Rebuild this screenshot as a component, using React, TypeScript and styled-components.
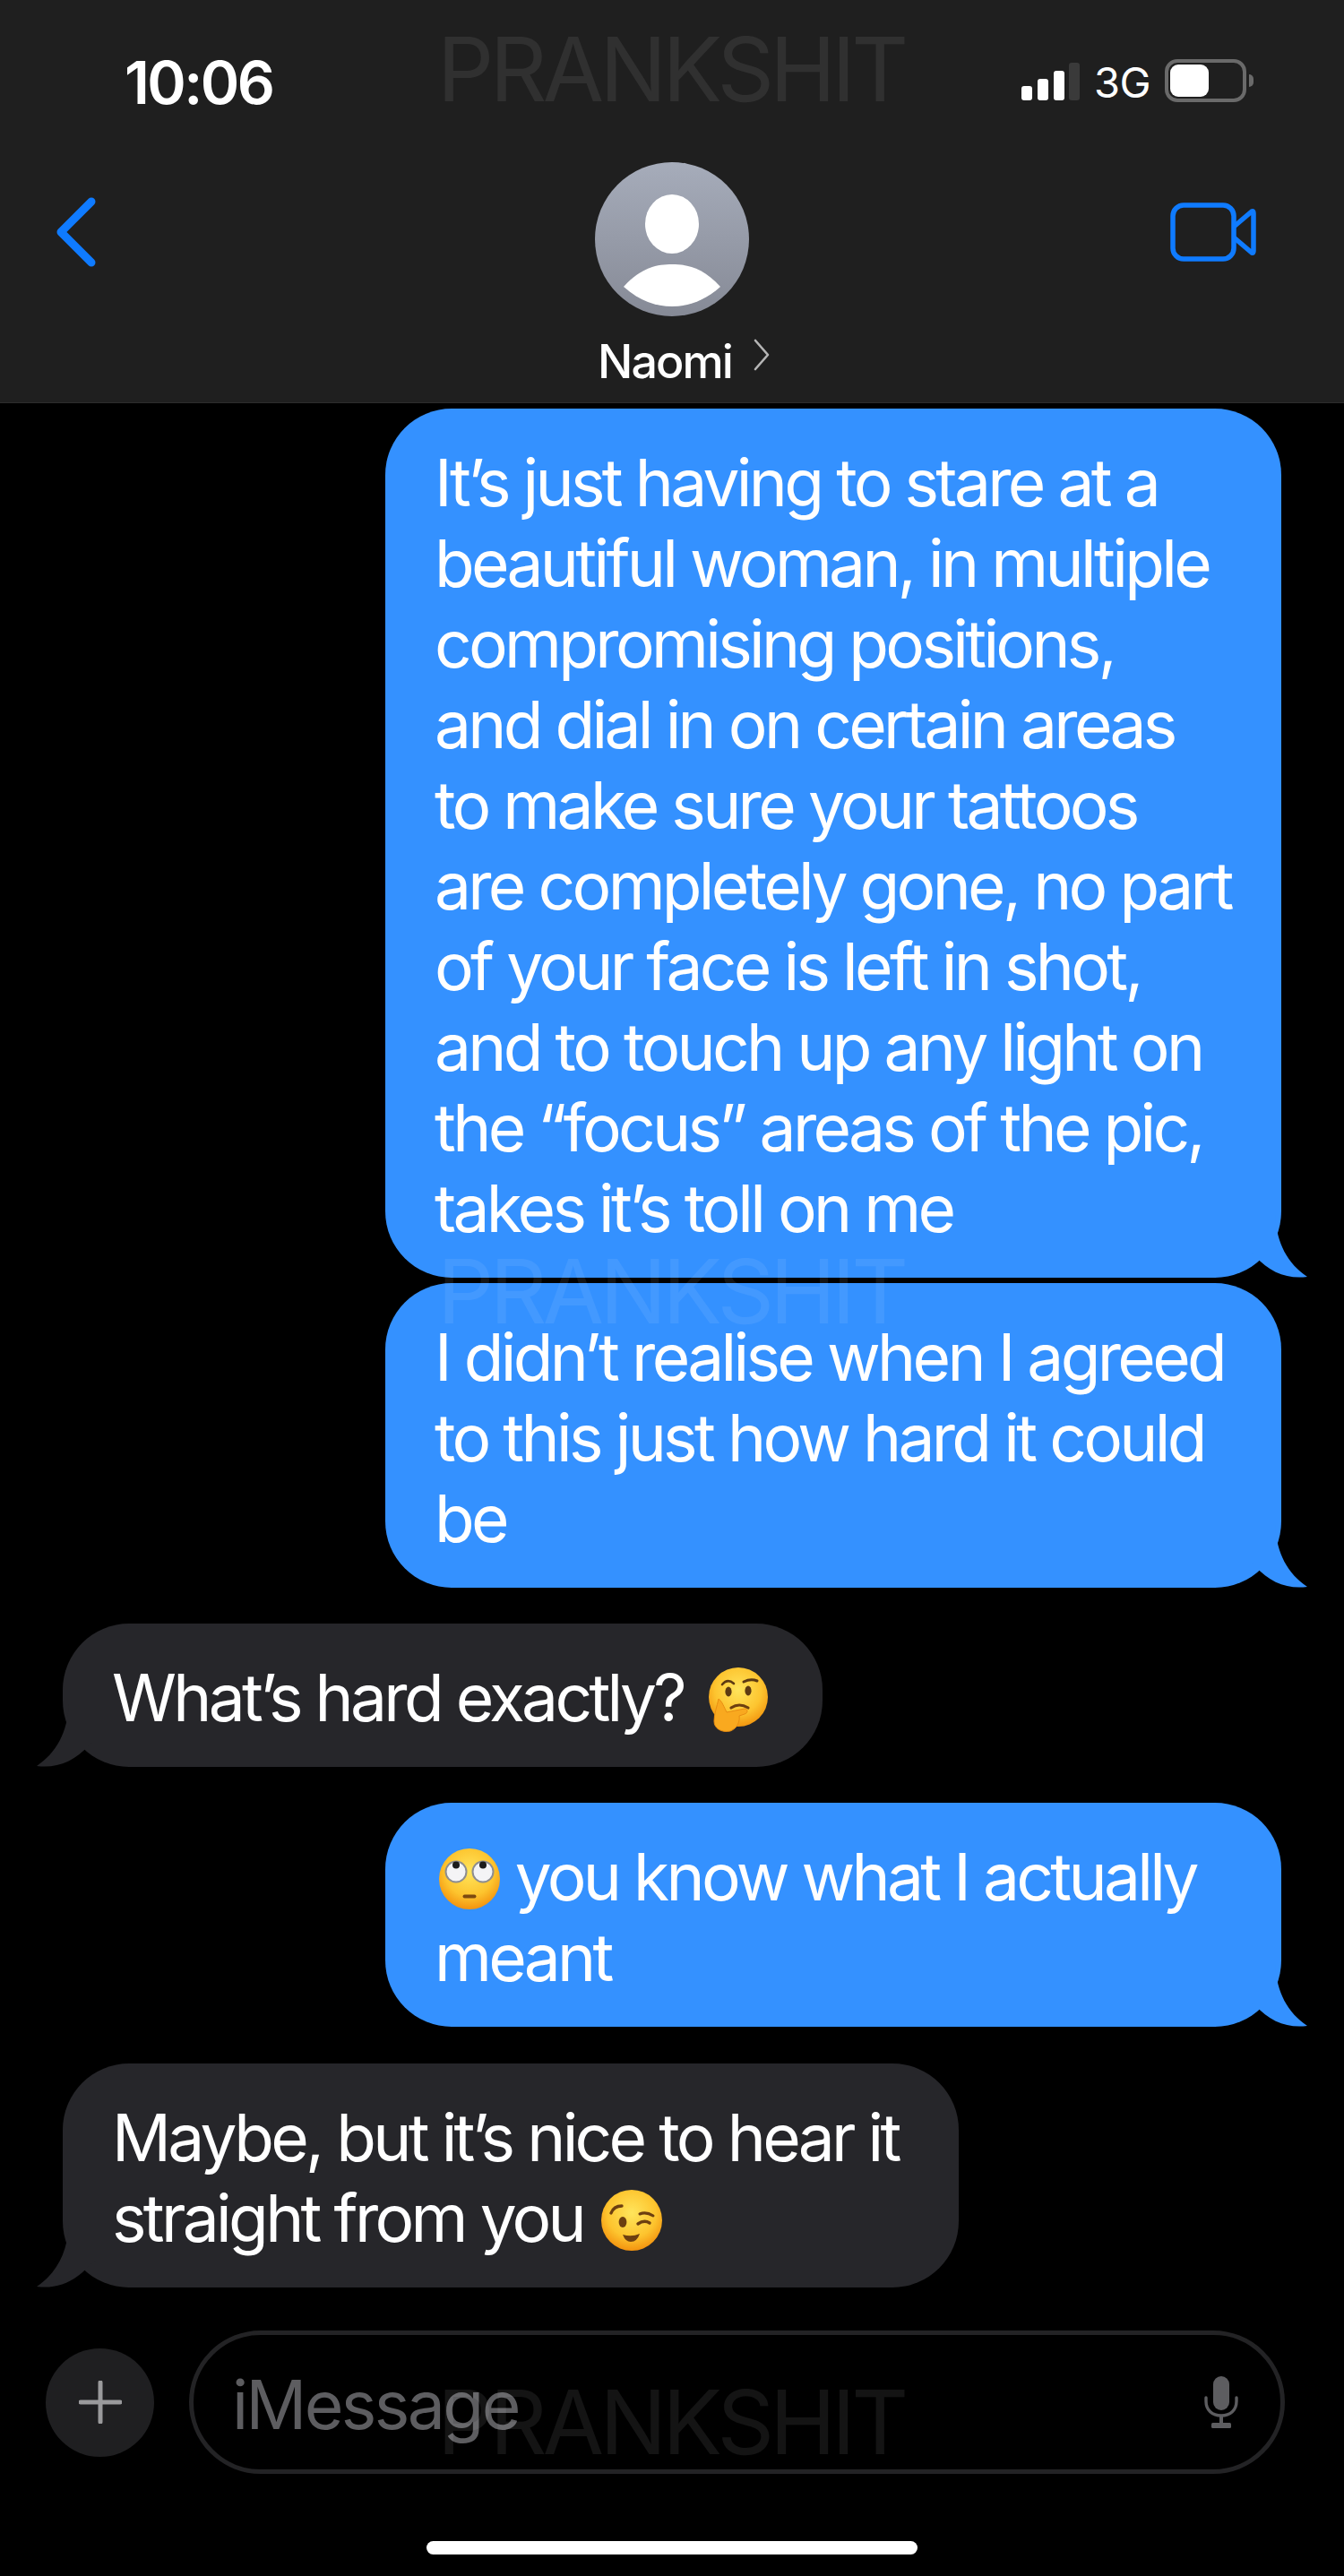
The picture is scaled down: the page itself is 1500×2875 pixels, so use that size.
import styled, { createGlobalStyle } from "styled-components";

const GlobalStyle = createGlobalStyle`
  html, body {
    margin: 0;
    padding: 0;
    background: #000;
  }
`;

function ThinkingEmoji() {
  return (
    <EmojiIcon viewBox="0 0 70 72" $width={70} $height={72} $lift={-12} $shift={9}>
      <defs>
        <radialGradient id="thinkFace" cx="50%" cy="38%" r="60%">
          <stop offset="0%" stopColor="#ffe45c" />
          <stop offset="65%" stopColor="#fdc530" />
          <stop offset="100%" stopColor="#f39a12" />
        </radialGradient>
      </defs>
      <circle cx="35" cy="33" r="33" fill="url(#thinkFace)" />
      <path d="M17 19 Q23 12 30 18" fill="none" stroke="#5d3a12" strokeWidth="2.6" strokeLinecap="round" />
      <path d="M41 16 Q49 12 56 15" fill="none" stroke="#5d3a12" strokeWidth="3" strokeLinecap="round" />
      <ellipse cx="24" cy="27" rx="3.6" ry="5.4" fill="#5d3a12" />
      <ellipse cx="46" cy="26" rx="3.6" ry="5.4" fill="#5d3a12" />
      <path d="M27 45 Q36 39 46 45" fill="none" stroke="#6d3f10" strokeWidth="3.2" strokeLinecap="round" />
      <path
        d="M13 35 C17 38 19 44 22 50 L42 46 C46 46 46 51 42 52 L36 54 C37 60 34 68 26 71 C16 73 8 68 8 60 C8 52 11 44 13 35 Z"
        fill="#f9a91f"
        stroke="#e98d12"
        strokeWidth="1"
      />
    </EmojiIcon>
  );
}

function RollingEyesEmoji() {
  return (
    <EmojiIcon viewBox="0 0 68 68" $width={68} $height={68} $lift={-10} $shift={5}>
      <defs>
        <radialGradient id="rollFace" cx="50%" cy="38%" r="62%">
          <stop offset="0%" stopColor="#ffe55c" />
          <stop offset="65%" stopColor="#fdc42e" />
          <stop offset="100%" stopColor="#f3930f" />
        </radialGradient>
      </defs>
      <circle cx="34" cy="34" r="34" fill="url(#rollFace)" />
      <circle cx="19" cy="26" r="11.5" fill="#f4f4f6" stroke="#8d8d90" strokeWidth="2" />
      <circle cx="49" cy="26" r="11.5" fill="#f4f4f6" stroke="#8d8d90" strokeWidth="2" />
      <circle cx="19" cy="18.5" r="4" fill="#1c1c1c" />
      <circle cx="49" cy="18.5" r="4" fill="#1c1c1c" />
      <rect x="26.5" y="51.5" width="15" height="4" rx="2" fill="#7d4a10" />
    </EmojiIcon>
  );
}

function WinkEmoji() {
  return (
    <EmojiIcon viewBox="0 0 68 68" $width={68} $height={68} $lift={-10} $shift={3}>
      <defs>
        <radialGradient id="winkFace" cx="50%" cy="38%" r="62%">
          <stop offset="0%" stopColor="#ffe55c" />
          <stop offset="65%" stopColor="#fdc42e" />
          <stop offset="100%" stopColor="#f3930f" />
        </radialGradient>
      </defs>
      <circle cx="34" cy="34" r="34" fill="url(#winkFace)" />
      <path d="M11 26 Q14 18 23 18" fill="none" stroke="#6d3f10" strokeWidth="3.4" strokeLinecap="round" />
      <ellipse cx="24" cy="36" rx="4.4" ry="6" fill="#6d3f10" />
      <path d="M43 27 Q50 24 58 29" fill="none" stroke="#6d3f10" strokeWidth="3" strokeLinecap="round" />
      <path d="M41 38 Q48 33 54 37" fill="none" stroke="#6d3f10" strokeWidth="3.4" strokeLinecap="round" />
      <path d="M24 50 Q34 53 43 49 Q40 58 33 58 Q27 58 24 50 Z" fill="#6d3f10" />
    </EmojiIcon>
  );
}

function Tail({ $side, color }: { $side: "left" | "right"; color: string }) {
  return (
    <TailIcon viewBox="0 0 66 70" $side={$side}>
      <path d="M36 0 C34 32 22 54 0 69 C22 72 42 64 58 46 L66 40 L66 0 Z" fill={color} />
    </TailIcon>
  );
}

export default function App() {
  return (
    <Page>
      <GlobalStyle />
      <Header>
        <StatusBar>
          <Time>10:06</Time>
          <StatusIcons>
            <SignalBars>
              <SignalBar $height={16} />
              <SignalBar $height={24} />
              <SignalBar $height={33} />
              <SignalBar $height={42} $dim />
            </SignalBars>
            <NetworkLabel>3G</NetworkLabel>
            <Battery>
              <BatteryFill />
            </Battery>
          </StatusIcons>
        </StatusBar>
        <NavRow>
          <BackIcon viewBox="0 0 46 78">
            <path d="M40 5 L6 39 L40 73" fill="none" stroke="#0f7bff" strokeWidth="9" strokeLinecap="round" strokeLinejoin="round" />
          </BackIcon>
          <Contact>
            <Avatar viewBox="0 0 172 172">
              <defs>
                <linearGradient id="avatarBg" x1="0" y1="0" x2="0" y2="1">
                  <stop offset="0%" stopColor="#a6acba" />
                  <stop offset="100%" stopColor="#868a96" />
                </linearGradient>
              </defs>
              <circle cx="86" cy="86" r="86" fill="url(#avatarBg)" />
              <ellipse cx="86" cy="69" rx="30" ry="33" fill="#fff" />
              <path d="M32 139 C52 117 70 114 86 114 C102 114 120 117 140 139 C122 155 104 161 86 161 C68 161 50 155 32 139 Z" fill="#fff" />
            </Avatar>
            <ContactName>
              Naomi
              <NameChevron viewBox="0 0 20 36">
                <path d="M3 2 L17 18 L3 34" fill="none" stroke="#b5b5b5" strokeWidth="2.6" strokeLinecap="round" strokeLinejoin="round" />
              </NameChevron>
            </ContactName>
          </Contact>
          <VideoIcon viewBox="0 0 96 66">
            <rect x="3" y="3" width="68" height="60" rx="12" fill="none" stroke="#0f7bff" strokeWidth="5.5" />
            <path d="M71 27 L91 10 Q93 9 93 12 L93 54 Q93 57 91 56 L71 39" fill="none" stroke="#0f7bff" strokeWidth="5.5" strokeLinejoin="round" />
          </VideoIcon>
        </NavRow>
      </Header>

      <Messages>
        <Row $mine $gap={6}>
          <Bubble $mine $width={1000}>
            It’s just having to stare at a
            <br />
            beautiful woman, in multiple
            <br />
            compromising positions,
            <br />
            and dial in on certain areas
            <br />
            to make sure your tattoos
            <br />
            are completely gone, no part
            <br />
            of your face is left in shot,
            <br />
            and to touch up any light on
            <br />
            the “focus” areas of the pic,
            <br />
            takes it’s toll on me
            <Tail $side="right" color="#3491ff" />
          </Bubble>
        </Row>
        <Row $mine $gap={6}>
          <Bubble $mine $width={1000}>
            I didn’t realise when I agreed
            <br />
            to this just how hard it could
            <br />
            be
            <Tail $side="right" color="#3491ff" />
          </Bubble>
        </Row>
        <Row $gap={40}>
          <Bubble $width={848}>
            What’s hard exactly? <ThinkingEmoji />
            <Tail $side="left" color="#26262a" />
          </Bubble>
        </Row>
        <Row $mine $gap={40}>
          <Bubble $mine $width={1000}>
            <RollingEyesEmoji /> you know what I actually
            <br />
            meant
            <Tail $side="right" color="#3491ff" />
          </Bubble>
        </Row>
        <Row $gap={41}>
          <Bubble $width={1000}>
            Maybe, but it’s nice to hear it
            <br />
            straight from you <WinkEmoji />
            <Tail $side="left" color="#26262a" />
          </Bubble>
        </Row>
      </Messages>

      <Composer>
        <PlusButton>
          <svg viewBox="0 0 48 48" width="48" height="48">
            <path d="M24 2 V46 M2 24 H46" stroke="#9a9a9c" strokeWidth="5" strokeLinecap="round" />
          </svg>
        </PlusButton>
        <InputField>
          <Placeholder>iMessage</Placeholder>
          <MicIcon viewBox="0 0 40 58">
            <rect x="11" y="0" width="18" height="38" rx="9" fill="#5d5d60" />
            <path d="M3 24 V28 C3 38 10 44 20 44 C30 44 37 38 37 28 V24" fill="none" stroke="#5d5d60" strokeWidth="3.4" strokeLinecap="round" />
            <rect x="18" y="44" width="4" height="9" fill="#5d5d60" />
            <rect x="9" y="52" width="22" height="6" rx="1.5" fill="#5d5d60" />
          </MicIcon>
        </InputField>
      </Composer>
      <HomeBar />

      <Watermark $top={28}>PRANKSHIT</Watermark>
      <Watermark $top={1392}>PRANKSHIT</Watermark>
      <Watermark $top={2654}>PRANKSHIT</Watermark>
    </Page>
  );
}

const Page = styled.div`
  position: relative;
  width: 1500px;
  height: 2875px;
  overflow: hidden;
  background: #000;
  font-family: Inter, "Liberation Sans", sans-serif;
  color: #fff;
`;

const Header = styled.header`
  height: 450px;
  box-sizing: border-box;
  background: #1f1f1f;
  border-bottom: 1px solid #2c2c2c;
`;

const StatusBar = styled.div`
  display: flex;
  align-items: flex-start;
  justify-content: space-between;
  height: 181px;
  box-sizing: border-box;
  padding: 56px 109px 0 139px;
`;

const Time = styled.div`
  font-size: 66px;
  font-weight: 600;
  line-height: 72px;
  letter-spacing: -2.6px;
`;

const StatusIcons = styled.div`
  display: flex;
  align-items: center;
  height: 60px;
  margin-top: 4px;
  gap: 16px;
`;

const SignalBars = styled.div`
  display: flex;
  align-items: flex-end;
  gap: 5.6px;
  height: 42px;
  margin-top: 2px;
`;

const SignalBar = styled.div<{ $height: number; $dim?: boolean }>`
  width: 12px;
  height: ${(p) => p.$height}px;
  border-radius: 3px;
  background: ${(p) => (p.$dim ? "#3a3a3a" : "#fff")};
`;

const NetworkLabel = styled.div`
  font-size: 47px;
  line-height: 48px;
  font-weight: 400;
  letter-spacing: -0.6px;
  margin-top: 3px;
`;

const Battery = styled.div`
  position: relative;
  width: 91px;
  height: 48px;
  box-sizing: border-box;
  border: 4px solid #6a6a6a;
  border-radius: 14px;
  padding: 2px;

  &::after {
    content: "";
    position: absolute;
    left: 90px;
    top: 13px;
    width: 5px;
    height: 14px;
    background: #6a6a6a;
    border-radius: 0 5px 5px 0;
  }
`;

const BatteryFill = styled.div`
  width: 43px;
  height: 100%;
  background: #fff;
  border-radius: 9px;
`;

const NavRow = styled.div`
  display: grid;
  grid-template-columns: 1fr auto 1fr;
  padding: 0 62px;
`;

const BackIcon = styled.svg`
  width: 46px;
  height: 78px;
  margin-top: 39px;
`;

const Contact = styled.div`
  display: flex;
  flex-direction: column;
  align-items: center;
`;

const Avatar = styled.svg`
  width: 172px;
  height: 172px;
`;

const ContactName = styled.div`
  margin-top: 20px;
  margin-left: 27px;
  font-size: 52px;
  line-height: 62px;
  letter-spacing: -1.9px;
  font-weight: 500;
  display: flex;
  align-items: flex-start;
  gap: 23px;
`;

const NameChevron = styled.svg`
  width: 20px;
  height: 36px;
  margin-top: 5px;
`;

const VideoIcon = styled.svg`
  justify-self: end;
  width: 96px;
  height: 66px;
  margin-top: 45px;
  margin-right: 36px;
`;

const Messages = styled.main`
  display: flex;
  flex-direction: column;
  padding: 0 70px;
`;

const Row = styled.div<{ $mine?: boolean; $gap: number }>`
  display: flex;
  justify-content: ${(p) => (p.$mine ? "flex-end" : "flex-start")};
  margin-top: ${(p) => p.$gap}px;
`;

const Bubble = styled.div<{ $mine?: boolean; $width: number }>`
  position: relative;
  box-sizing: border-box;
  width: ${(p) => p.$width}px;
  padding: 38px 0 32px 55px;
  border-radius: 74px;
  background: ${(p) => (p.$mine ? "#3491ff" : "#26262a")};
  font-size: 73px;
  line-height: 90px;
  letter-spacing: -3.7px;
  white-space: nowrap;
`;

const TailIcon = styled.svg<{ $side: "left" | "right" }>`
  position: absolute;
  bottom: 0;
  width: 66px;
  height: 70px;
  ${(p) =>
    p.$side === "left"
      ? "left: -29px;"
      : "right: -29px; transform: scaleX(-1);"}
`;

const EmojiIcon = styled.svg<{
  $width: number;
  $height: number;
  $lift: number;
  $shift: number;
}>`
  width: ${(p) => p.$width}px;
  height: ${(p) => p.$height}px;
  margin-left: ${(p) => p.$shift}px;
  vertical-align: ${(p) => p.$lift}px;
`;

const Composer = styled.div`
  display: flex;
  align-items: center;
  gap: 39px;
  margin-top: 48px;
  padding-left: 51px;
`;

const PlusButton = styled.div`
  display: flex;
  align-items: center;
  justify-content: center;
  width: 121px;
  height: 121px;
  border-radius: 50%;
  background: #1f1f21;
`;

const InputField = styled.div`
  display: flex;
  align-items: center;
  justify-content: space-between;
  box-sizing: border-box;
  width: 1223px;
  height: 160px;
  padding: 0 46px 0 43px;
  border: 5px solid #232325;
  border-radius: 80px;
`;

const Placeholder = styled.div`
  font-size: 75px;
  line-height: 90px;
  letter-spacing: -2.6px;
  color: #5d5d60;
  margin-top: 6px;
`;

const MicIcon = styled.svg`
  width: 40px;
  height: 58px;
`;

const HomeBar = styled.div`
  width: 548px;
  height: 15px;
  margin: 75px auto 0;
  border-radius: 8px;
  background: #fff;
`;

const Watermark = styled.div<{ $top: number }>`
  position: absolute;
  left: 488px;
  top: ${(p) => p.$top}px;
  font-size: 99px;
  line-height: 99px;
  letter-spacing: -4.6px;
  color: rgba(255, 255, 255, 0.08);
  pointer-events: none;
`;
